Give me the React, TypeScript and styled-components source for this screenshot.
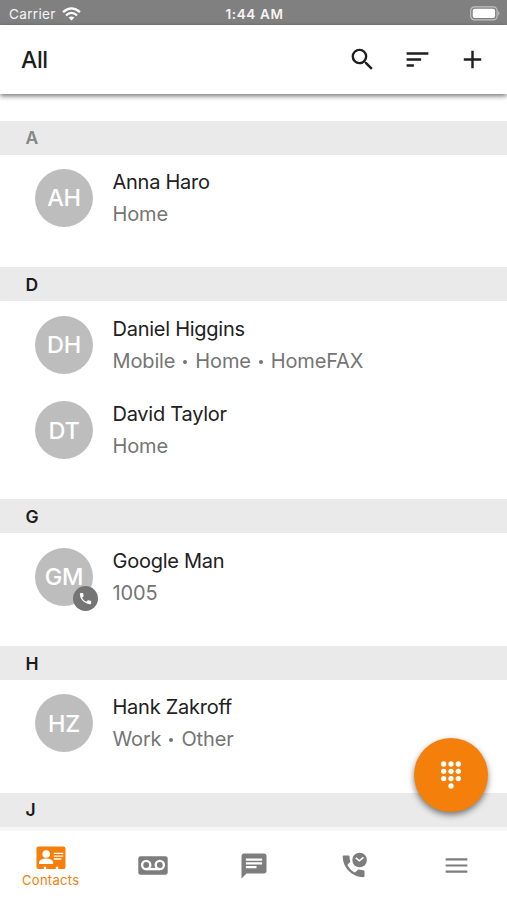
import React, { Fragment } from 'react';
import styled, { createGlobalStyle } from 'styled-components';

const GlobalStyle = createGlobalStyle`
  * { box-sizing: border-box; }
  body {
    margin: 0;
    background: #fff;
    font-family: Inter, "Liberation Sans", sans-serif;
  }
`;

const Screen = styled.div`
  position: relative;
  display: flex;
  flex-direction: column;
  width: 507px;
  height: 900px;
  overflow: hidden;
  background: #fff;
`;

const StatusBar = styled.header`
  display: grid;
  grid-template-columns: 1fr auto 1fr;
  align-items: center;
  flex: none;
  height: 25px;
  padding: 2px 7px 0 9px;
  background: #808080;
  color: #f5f5f5;
  font-size: 13px;
`;

const Carrier = styled.div`
  display: flex;
  align-items: center;
  gap: 6px;
  font-size: 13.5px;
  letter-spacing: 0.35px;
`;

const Clock = styled.div`
  font-size: 13.5px;
  font-weight: 600;
  letter-spacing: 0.6px;
`;

const BatterySlot = styled.div`
  display: flex;
  justify-content: flex-end;
  margin-right: -1px;
`;

const Toolbar = styled.div`
  position: relative;
  z-index: 1;
  display: flex;
  align-items: center;
  flex: none;
  height: 69px;
  padding: 0 20.5px 0 21px;
  background: #fff;
  box-shadow: 0 2px 5px rgba(0, 0, 0, 0.55);
`;

const Title = styled.h1`
  flex: 1;
  margin: 0;
  color: #1c1c1c;
  font-size: 23px;
  font-weight: 500;
  letter-spacing: -0.4px;
`;

const Actions = styled.div`
  display: flex;
  gap: 26px;
`;

const IconButton = styled.button`
  display: flex;
  padding: 0;
  border: 0;
  background: none;
  color: #1f1f1f;
`;

const List = styled.main`
  flex: 1;
  min-height: 0;
  padding-top: 26.6px;
  overflow: hidden;
`;

const Section = styled.section`
  padding-bottom: 26.9px;
`;

const Letter = styled.h2<{ $muted?: boolean }>`
  display: flex;
  align-items: center;
  height: 34px;
  margin: 0;
  padding-left: 25.5px;
  background: #eaeaea;
  color: ${(p) => (p.$muted ? '#858585' : '#1c1c1c')};
  font-size: 17.5px;
  font-weight: 600;
`;

const Row = styled.article`
  display: flex;
  align-items: center;
  gap: 19.5px;
  height: 85.7px;
  padding: 1.1px 0 0 35px;
`;

const Avatar = styled.div`
  position: relative;
  display: flex;
  align-items: center;
  justify-content: center;
  width: 58px;
  height: 58px;
  border-radius: 50%;
  background: #bdbdbd;
  color: #fff;
  font-size: 23.5px;
  font-weight: 500;
  letter-spacing: -0.3px;
`;

const Badge = styled.span`
  position: absolute;
  right: -5px;
  bottom: -5px;
  display: flex;
  align-items: center;
  justify-content: center;
  width: 25px;
  height: 25px;
  border-radius: 50%;
  background: #757575;
`;

const Name = styled.div`
  color: #212121;
  font-size: 20px;
  line-height: 32px;
  letter-spacing: -0.26px;
`;

const Labels = styled(Name)`
  color: #757575;
  letter-spacing: -0.14px;
`;

const Dot = styled.span`
  display: inline-block;
  width: 4px;
  height: 4px;
  margin: 0 8px;
  border-radius: 50%;
  background: currentColor;
  vertical-align: 4px;
`;

const DialButton = styled.button`
  position: absolute;
  z-index: 3;
  right: 19px;
  bottom: 88px;
  display: flex;
  align-items: center;
  justify-content: center;
  width: 74px;
  height: 74px;
  padding: 0;
  border: 0;
  border-radius: 50%;
  background: #f57f0b;
  color: #fff;
  box-shadow: 0 3px 6px rgba(0, 0, 0, 0.5);
`;

const TabBar = styled.nav`
  position: relative;
  z-index: 2;
  display: grid;
  grid-template-columns: repeat(5, 1fr);
  flex: none;
  height: 69px;
  background: #fff;
  box-shadow: 0 -4px 0 #f6f6f6;
`;

const Tab = styled.button<{ $active?: boolean }>`
  display: flex;
  flex-direction: column;
  align-items: center;
  justify-content: center;
  gap: 2px;
  padding: ${(p) => (p.$active ? '4px 0 0' : '0 0 0 1px')};
  border: 0;
  background: none;
  color: ${(p) => (p.$active ? '#f57f0b' : '#7d7d7d')};
  font-family: inherit;
  font-size: 13px;
  line-height: 17px;
  letter-spacing: 0.3px;
`;

const Glyph = ({ d, size = 29 }: { d: string; size?: number }) => (
  <svg width={size} height={size} viewBox="0 0 24 24" fill="currentColor">
    <path d={d} />
  </svg>
);

const searchPath =
  'M15.5 14h-.79l-.28-.27A6.471 6.471 0 0 0 16 9.5 6.5 6.5 0 1 0 9.5 16c1.61 0 3.09-.59 4.23-1.57l.27.28v.79l5 4.99L20.49 19l-4.99-5zm-6 0C7.01 14 5 11.99 5 9.5S7.01 5 9.5 5 14 7.01 14 9.5 11.99 14 9.5 14z';
const sortPath = 'M3 18h6v-2H3v2zM3 6v2h18V6H3zm0 7h12v-2H3v2z';
const addPath = 'M19.2 13H13v6.2h-2V13H4.800v-2H11V4.800h2V11h6.200v2z';
const chatPath =
  'M20 2H4c-1.100 0-1.990.9-1.990 2L2 22l4-4h14c1.100 0 2-.9 2-2V4c0-1.100-.9-2-2-2zM5.500 9h13v1.800h-13V9zm8.500 4.800H5.500v-1.800H14v1.800zM18.500 7.800h-13V6h13v1.800z';
const phonePath =
  'M6.620 10.790c1.440 2.830 3.760 5.140 6.590 6.590l2.200-2.200c.27-.27.67-.36 1.020-.24 1.120.37 2.330.57 3.570.57.550 0 1 .450 1 1V20c0 .550-.450 1-1 1-9.390 0-17-7.610-17-17 0-.550.450-1 1-1h3.500c.550 0 1 .450 1 1 0 1.250.2 2.450.57 3.570.110.350.030.740-.250 1.020l-2.200 2.200z';
const menuPath = 'M3 18h18v-1.800H3V18zm0-5.100h18v-1.800H3v1.800zM3 6v1.800h18V6H3z';

const WifiIcon = () => (
  <svg width="19" height="14" viewBox="0 0 19 14" fill="none" stroke="#fff" strokeWidth="2.300">
    <path d="M1 5.200Q9.500-2.500 18 5.200" />
    <path d="M4 8.300Q9.500 3.500 15 8.300" />
    <path d="M6.600 10.500Q9.500 8.300 12.400 10.500L9.500 13.500Z" fill="#fff" stroke="none" />
  </svg>
);

const BatteryIcon = () => (
  <svg width="31" height="15" viewBox="0 0 31 15">
    <rect x=".7" y=".9" width="26.400" height="13" rx="3.800" fill="none" stroke="#c2c2c2" strokeWidth="1.200" />
    <rect x="2.700" y="2.800" width="22.400" height="9.200" rx="2" fill="#fff" />
    <path d="M28.300 5q2.500 2.400 0 4.800z" fill="#c2c2c2" />
  </svg>
);

const DialpadIcon = () => (
  <svg width="22" height="30" viewBox="0 0 22 30" fill="currentColor">
    {[3.700, 11, 18.300].flatMap((x) =>
      [4, 11.300, 18.600].map((y) => <circle key={`${x}-${y}`} cx={x} cy={y} r="2.650" />),
    )}
    <circle cx="11" cy="26" r="2.650" />
  </svg>
);

const ContactsIcon = () => (
  <svg width="30" height="24" viewBox="0 0 30 24">
    <path
      d="M2.500.5h25a2 2 0 0 1 2 2v18.500a2 2 0 0 1-2 2h-5.300v-2.200h-2.400V23h-9.600v-2.200H7.800V23H2.500a2 2 0 0 1-2-2v-18.500a2 2 0 0 1 2-2z"
      fill="currentColor"
    />
    <circle cx="10.200" cy="8" r="3.800" fill="#fff" />
    <path d="M3 18v-1.300c0-3 4.300-4.200 7.200-4.200s7 1.200 7 4.200V18z" fill="#fff" />
    <path d="M17.800 7.300h9.500M17.800 10.200h9.500M17.800 13h7.500" stroke="#fff" strokeWidth="1.300" />
  </svg>
);

const VoicemailIcon = () => (
  <svg width="30" height="19" viewBox="0 0 30 19">
    <rect x=".3" y=".3" width="29.400" height="18.400" rx="2.200" fill="currentColor" />
    <g fill="none" stroke="#fff" strokeWidth="2.400">
      <circle cx="8.200" cy="9" r="4.100" />
      <circle cx="21.800" cy="9" r="4.100" />
      <path d="M8.200 13.100h13.600" />
    </g>
  </svg>
);

const RecentsIcon = () => (
  <svg width="26" height="27" viewBox="0 0 26 27">
    <path
      d="M1.800 3.400h4.500c.7 0 1.200.5 1.200 1.200 0 1.500.25 3 .7 4.400.1.400 0 .9-.3 1.200l-2.500 2.700c1.800 3.400 4.200 5.800 7.600 7.600l2.700-2.600c.3-.3.800-.4 1.200-.3 1.400.5 2.900.7 4.400.7.700 0 1.200.5 1.200 1.200v4.600c0 .6-.5 1.100-1.200 1.100C10.200 25.200.7 15.800.7 4.600c0-.7.500-1.200 1.100-1.200z"
      fill="currentColor"
    />
    <circle cx="17.600" cy="8" r="7.300" fill="currentColor" />
    <path d="M13.800 5.900l3.500 2.900 4.200-3.500" fill="none" stroke="#fff" strokeWidth="1.600" />
  </svg>
);

interface Contact {
  initials: string;
  name: string;
  labels: string[];
  extension?: boolean;
}

const sections: { letter: string; contacts: Contact[] }[] = [
  { letter: 'A', contacts: [{ initials: 'AH', name: 'Anna Haro', labels: ['Home'] }] },
  {
    letter: 'D',
    contacts: [
      { initials: 'DH', name: 'Daniel Higgins', labels: ['Mobile', 'Home', 'HomeFAX'] },
      { initials: 'DT', name: 'David Taylor', labels: ['Home'] },
    ],
  },
  { letter: 'G', contacts: [{ initials: 'GM', name: 'Google Man', labels: ['1005'], extension: true }] },
  { letter: 'H', contacts: [{ initials: 'HZ', name: 'Hank Zakroff', labels: ['Work', 'Other'] }] },
  { letter: 'J', contacts: [] },
];

export default function App() {
  return (
    <>
      <GlobalStyle />
      <Screen>
        <StatusBar>
          <Carrier>
            Carrier <WifiIcon />
          </Carrier>
          <Clock>1:44 AM</Clock>
          <BatterySlot>
            <BatteryIcon />
          </BatterySlot>
        </StatusBar>
        <Toolbar>
          <Title>All</Title>
          <Actions>
            <IconButton aria-label="Search"><Glyph d={searchPath} /></IconButton>
            <IconButton aria-label="Sort"><Glyph d={sortPath} /></IconButton>
            <IconButton aria-label="Add"><Glyph d={addPath} /></IconButton>
          </Actions>
        </Toolbar>
        <List>
          {sections.map(({ letter, contacts }) => (
            <Section key={letter}>
              <Letter $muted={letter === 'A'}>{letter}</Letter>
              {contacts.map((c) => (
                <Row key={c.name}>
                  <Avatar>
                    {c.initials}
                    {c.extension && (
                      <Badge>
                        <Glyph d={phonePath} size={15} />
                      </Badge>
                    )}
                  </Avatar>
                  <div>
                    <Name>{c.name}</Name>
                    <Labels>
                      {c.labels.map((label, i) => (
                        <Fragment key={label}>
                          {i > 0 && <Dot />}
                          {label}
                        </Fragment>
                      ))}
                    </Labels>
                  </div>
                </Row>
              ))}
            </Section>
          ))}
        </List>
        <TabBar>
          <Tab $active>
            <ContactsIcon />
            Contacts
          </Tab>
          <Tab aria-label="Voicemail"><VoicemailIcon /></Tab>
          <Tab aria-label="Messages"><Glyph d={chatPath} size={30} /></Tab>
          <Tab aria-label="Recents"><RecentsIcon /></Tab>
          <Tab aria-label="Menu"><Glyph d={menuPath} /></Tab>
        </TabBar>
        <DialButton aria-label="Dialpad">
          <DialpadIcon />
        </DialButton>
      </Screen>
    </>
  );
}
